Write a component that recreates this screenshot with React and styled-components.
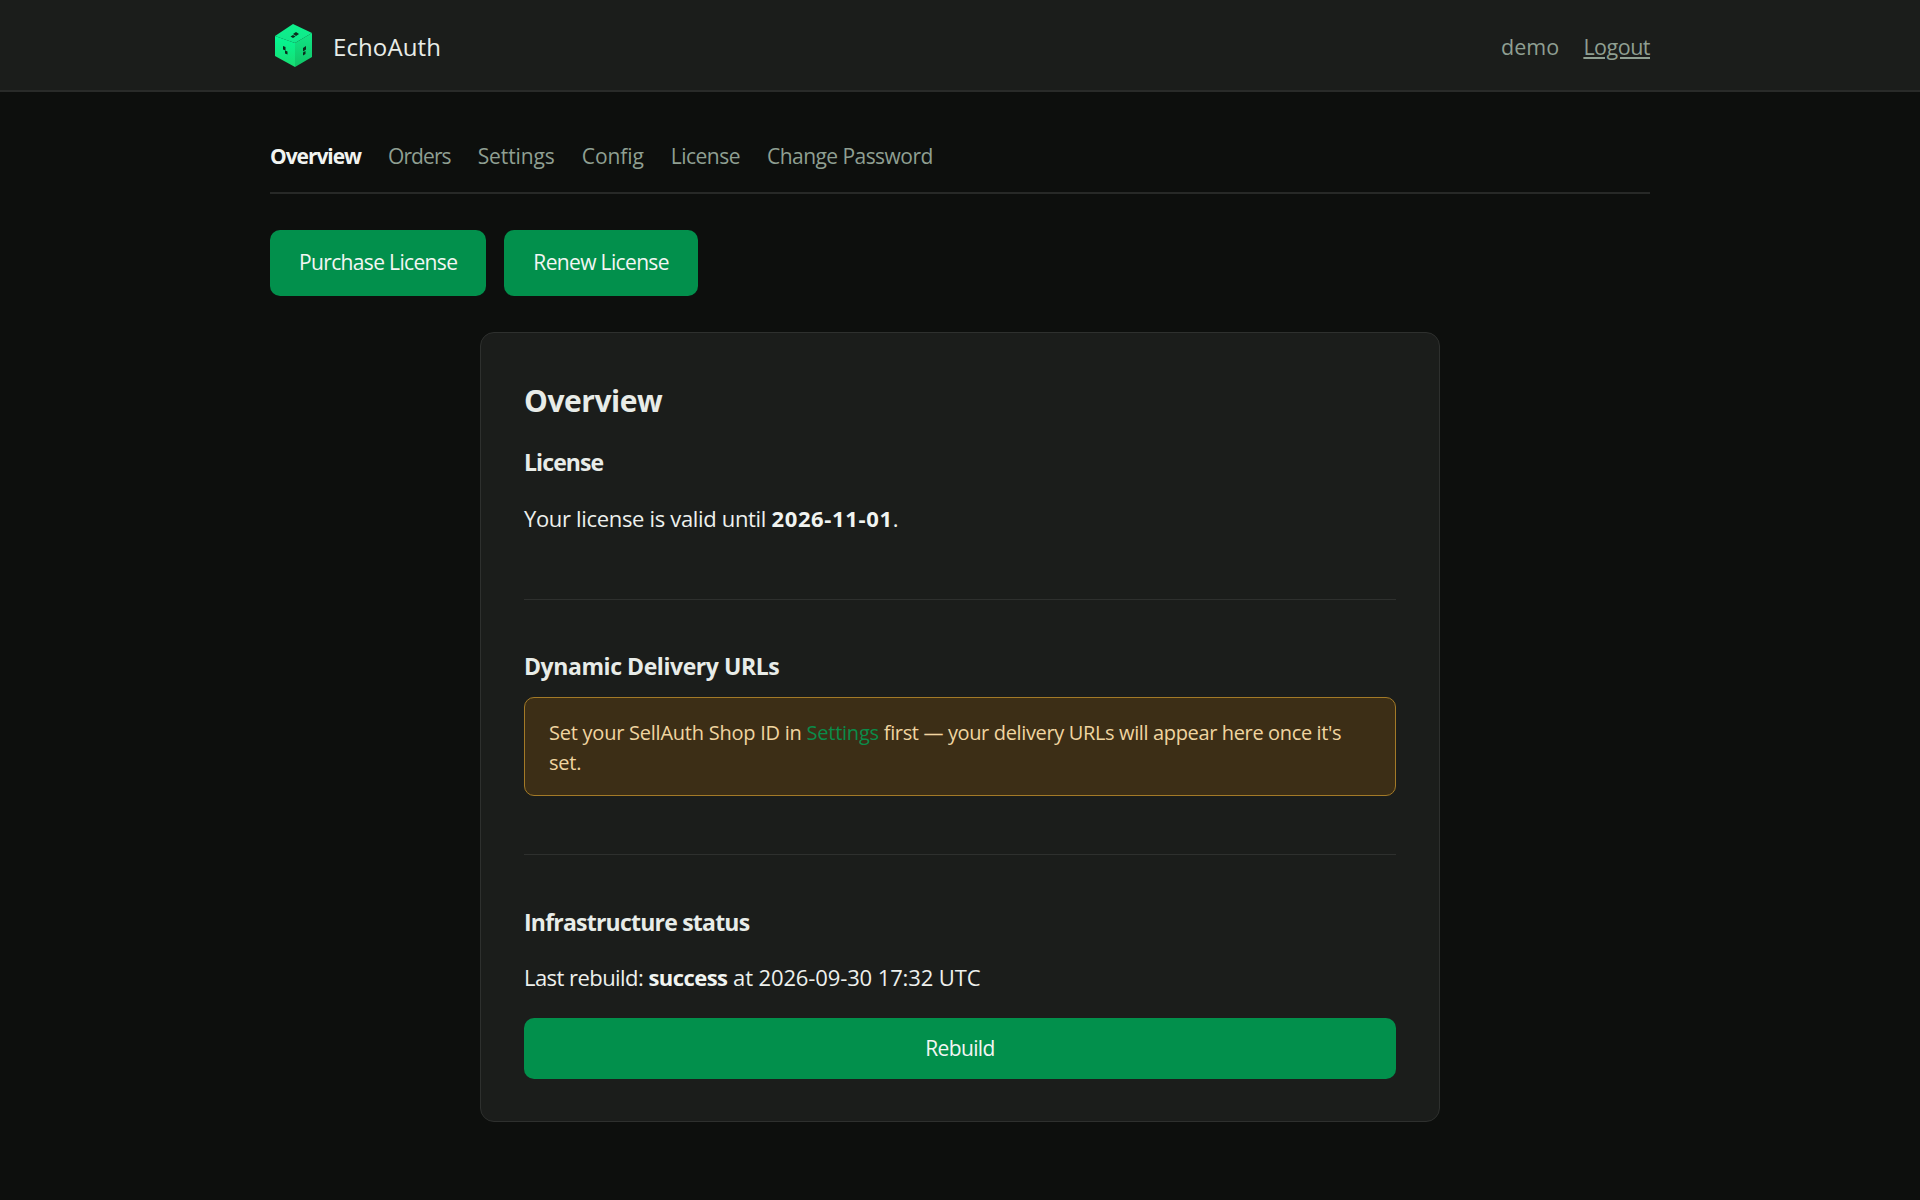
import React from "react";
import styled, { createGlobalStyle } from "styled-components";

const Global = createGlobalStyle`
  * { box-sizing: border-box; }
  html, body { margin: 0; padding: 0; background: #0d0f0d; }
  body {
    font-family: "Open Sans", "Noto Sans", "Liberation Sans", sans-serif;
    color: #e8ece8;
    min-height: 1200px;
  }
`;

const Header = styled.header`
  height: 92px;
  background: #1b1d1b;
  border-bottom: 2px solid #292b29;
`;
const HeaderInner = styled.div`
  width: 1380px;
  height: 100%;
  margin: 0 auto;
  padding-top: 2px;
  display: flex;
  align-items: center;
  justify-content: space-between;
`;
const Brand = styled.a`
  display: flex;
  align-items: center;
  gap: 18px;
  padding-left: 5px;
  font-size: 24px;
  font-weight: 500;
  letter-spacing: 0.1px;
  color: #e8ece8;
`;
const User = styled.div`
  display: flex;
  align-items: center;
  gap: 24px;
  font-size: 21.5px;
  color: #8f9f92;
`;
const Demo = styled.span`
  letter-spacing: 0.1px;
`;
const Logout = styled.a`
  color: #8f9f92;
  letter-spacing: -0.5px;
  text-decoration: underline;
`;

const Main = styled.main`
  width: 1380px;
  margin: 0 auto;
  padding-top: 49px;
`;
const Tabs = styled.nav`
  display: flex;
  gap: 27px;
  height: 53px;
  border-bottom: 2px solid #272927;
  font-size: 21px;
  line-height: 30px;
`;
const Tab = styled.a`
  color: ${(p) => (p.$active ? "#f1f4f1" : "#8f9f92")};
  font-weight: ${(p) => (p.$active ? 700 : 400)};
  letter-spacing: ${(p) => p.$spacing}px;
`;
const Actions = styled.div`
  display: flex;
  gap: 18px;
  margin-top: 36px;
`;
const Button = styled.button`
  height: 66px;
  padding: 0 29px 2px;
  border: none;
  border-radius: 10px;
  background: #02904c;
  color: #f2f6f3;
  font: inherit;
  font-size: 21px;
  letter-spacing: -0.65px;
`;
const WideButton = styled(Button)`
  display: block;
  width: 100%;
  height: 61px;
  margin-top: 25px;
`;
const Card = styled.section`
  width: 960px;
  margin: 36px auto 0;
  padding: 48px 43px 42px;
  background: #1b1d1b;
  border: 1px solid #2e302e;
  border-radius: 14px;
`;
const Title = styled.h2`
  margin: 0 0 25px;
  font-size: 30px;
  line-height: 40px;
  font-weight: 700;
  letter-spacing: -0.45px;
`;
const Heading = styled.h3`
  margin: 0;
  font-size: 23px;
  line-height: 32px;
  font-weight: 700;
  letter-spacing: ${(p) => p.$spacing}px;
`;
const Text = styled.p`
  margin: ${(p) => p.$top}px 0 0;
  font-size: 22px;
  line-height: 32px;
  color: #edf0ed;
`;
const Run = styled.span`
  letter-spacing: ${(p) => p.$spacing}px;
`;
const Strong = styled.b`
  font-weight: 700;
  color: #f1f4f1;
  letter-spacing: ${(p) => p.$spacing}px;
`;
const Rule = styled.hr`
  border: none;
  height: 1px;
  background: #2e302e;
  margin: ${(p) => p.$top}px 0 ${(p) => p.$bottom}px;
`;
const Notice = styled.div`
  margin-top: 15px;
  padding: 20px 24px 17px;
  background: #3c2e16;
  border: 1px solid #a37a27;
  border-radius: 10px;
  font-size: 20px;
  line-height: 30px;
  letter-spacing: -0.24px;
  color: #f0d5a0;
`;
const NoticeLink = styled.a`
  color: #0a8c4a;
`;

const Logo = () => (
  <svg width="40" height="44" viewBox="0 0 40 44" aria-hidden="true">
    <defs>
      <linearGradient id="lg" x1="0" y1="0" x2="0" y2="1">
        <stop offset="0" stopColor="#0ef08c" />
        <stop offset="1" stopColor="#10e88a" />
      </linearGradient>
      <linearGradient id="ll" x1="0" y1="0" x2="0" y2="1">
        <stop offset="0" stopColor="#04f894" />
        <stop offset="1" stopColor="#18dc72" />
      </linearGradient>
      <linearGradient id="lr" x1="0" y1="0" x2="0" y2="1">
        <stop offset="0" stopColor="#10e686" />
        <stop offset="1" stopColor="#10c466" />
      </linearGradient>
    </defs>
    <polygon points="18,0 37,9 20,19 0,12" fill="url(#lg)" />
    <polygon points="0,12 20,19 20,43 0,32" fill="url(#ll)" />
    <polygon points="37,9 37,33 20,43 20,19" fill="url(#lr)" />
    <path d="M18 10l3-2 3 2-3 2zM15.500 12.500l2.500-1.500 2.500 1.500-2.500 1.500z" fill="#0b2b1c" />
    <path d="M8 22l2.500 1v3.500l-2.500-1zM10 26.500l2.500 1v3l-2.500-1z" fill="#0b2b1c" />
    <path d="M31 22l-3 2v3.500l3-2zM30.500 27l-2.500 1.500v3l2.500-1.500z" fill="#0b2b1c" />
  </svg>
);

export default function App() {
  return (
    <>
      <Global />
      <Header>
        <HeaderInner>
          <Brand>
            <Logo />
            EchoAuth
          </Brand>
          <User>
            <Demo>demo</Demo>
            <Logout href="#">Logout</Logout>
          </User>
        </HeaderInner>
      </Header>
      <Main>
        <Tabs>
          <Tab $active $spacing={-1.05}>Overview</Tab>
          <Tab $spacing={-0.9}>Orders</Tab>
          <Tab $spacing={-0.1}>Settings</Tab>
          <Tab $spacing={-0.1}>Config</Tab>
          <Tab $spacing={-0.5}>License</Tab>
          <Tab $spacing={-0.55}>Change Password</Tab>
        </Tabs>
        <Actions>
          <Button>Purchase License</Button>
          <Button>Renew License</Button>
        </Actions>
        <Card>
          <Title>Overview</Title>
          <Heading $spacing={-0.9}>License</Heading>
          <Text $top={24}>
            <Run $spacing={-0.33}>Your license is valid until </Run>
            <Strong $spacing={0.65}>2026-11-01</Strong>.
          </Text>
          <Rule $top={65} $bottom={50} />
          <Heading $spacing={-0.43}>Dynamic Delivery URLs</Heading>
          <Notice>
            Set your SellAuth Shop ID in <NoticeLink>Settings</NoticeLink>{" "}
            <Run $spacing={-0.36}>first — your delivery URLs will appear here once it's</Run>
            <br />
            set.
          </Notice>
          <Rule $top={58} $bottom={51} />
          <Heading $spacing={-0.78}>Infrastructure status</Heading>
          <Text $top={23}>
            <Run $spacing={-0.55}>Last rebuild: </Run>
            <Strong $spacing={-0.55}>success</Strong>
            <Run $spacing={-0.12}> at 2026-09-30 17:32 UTC</Run>
          </Text>
          <WideButton>Rebuild</WideButton>
        </Card>
      </Main>
    </>
  );
}
